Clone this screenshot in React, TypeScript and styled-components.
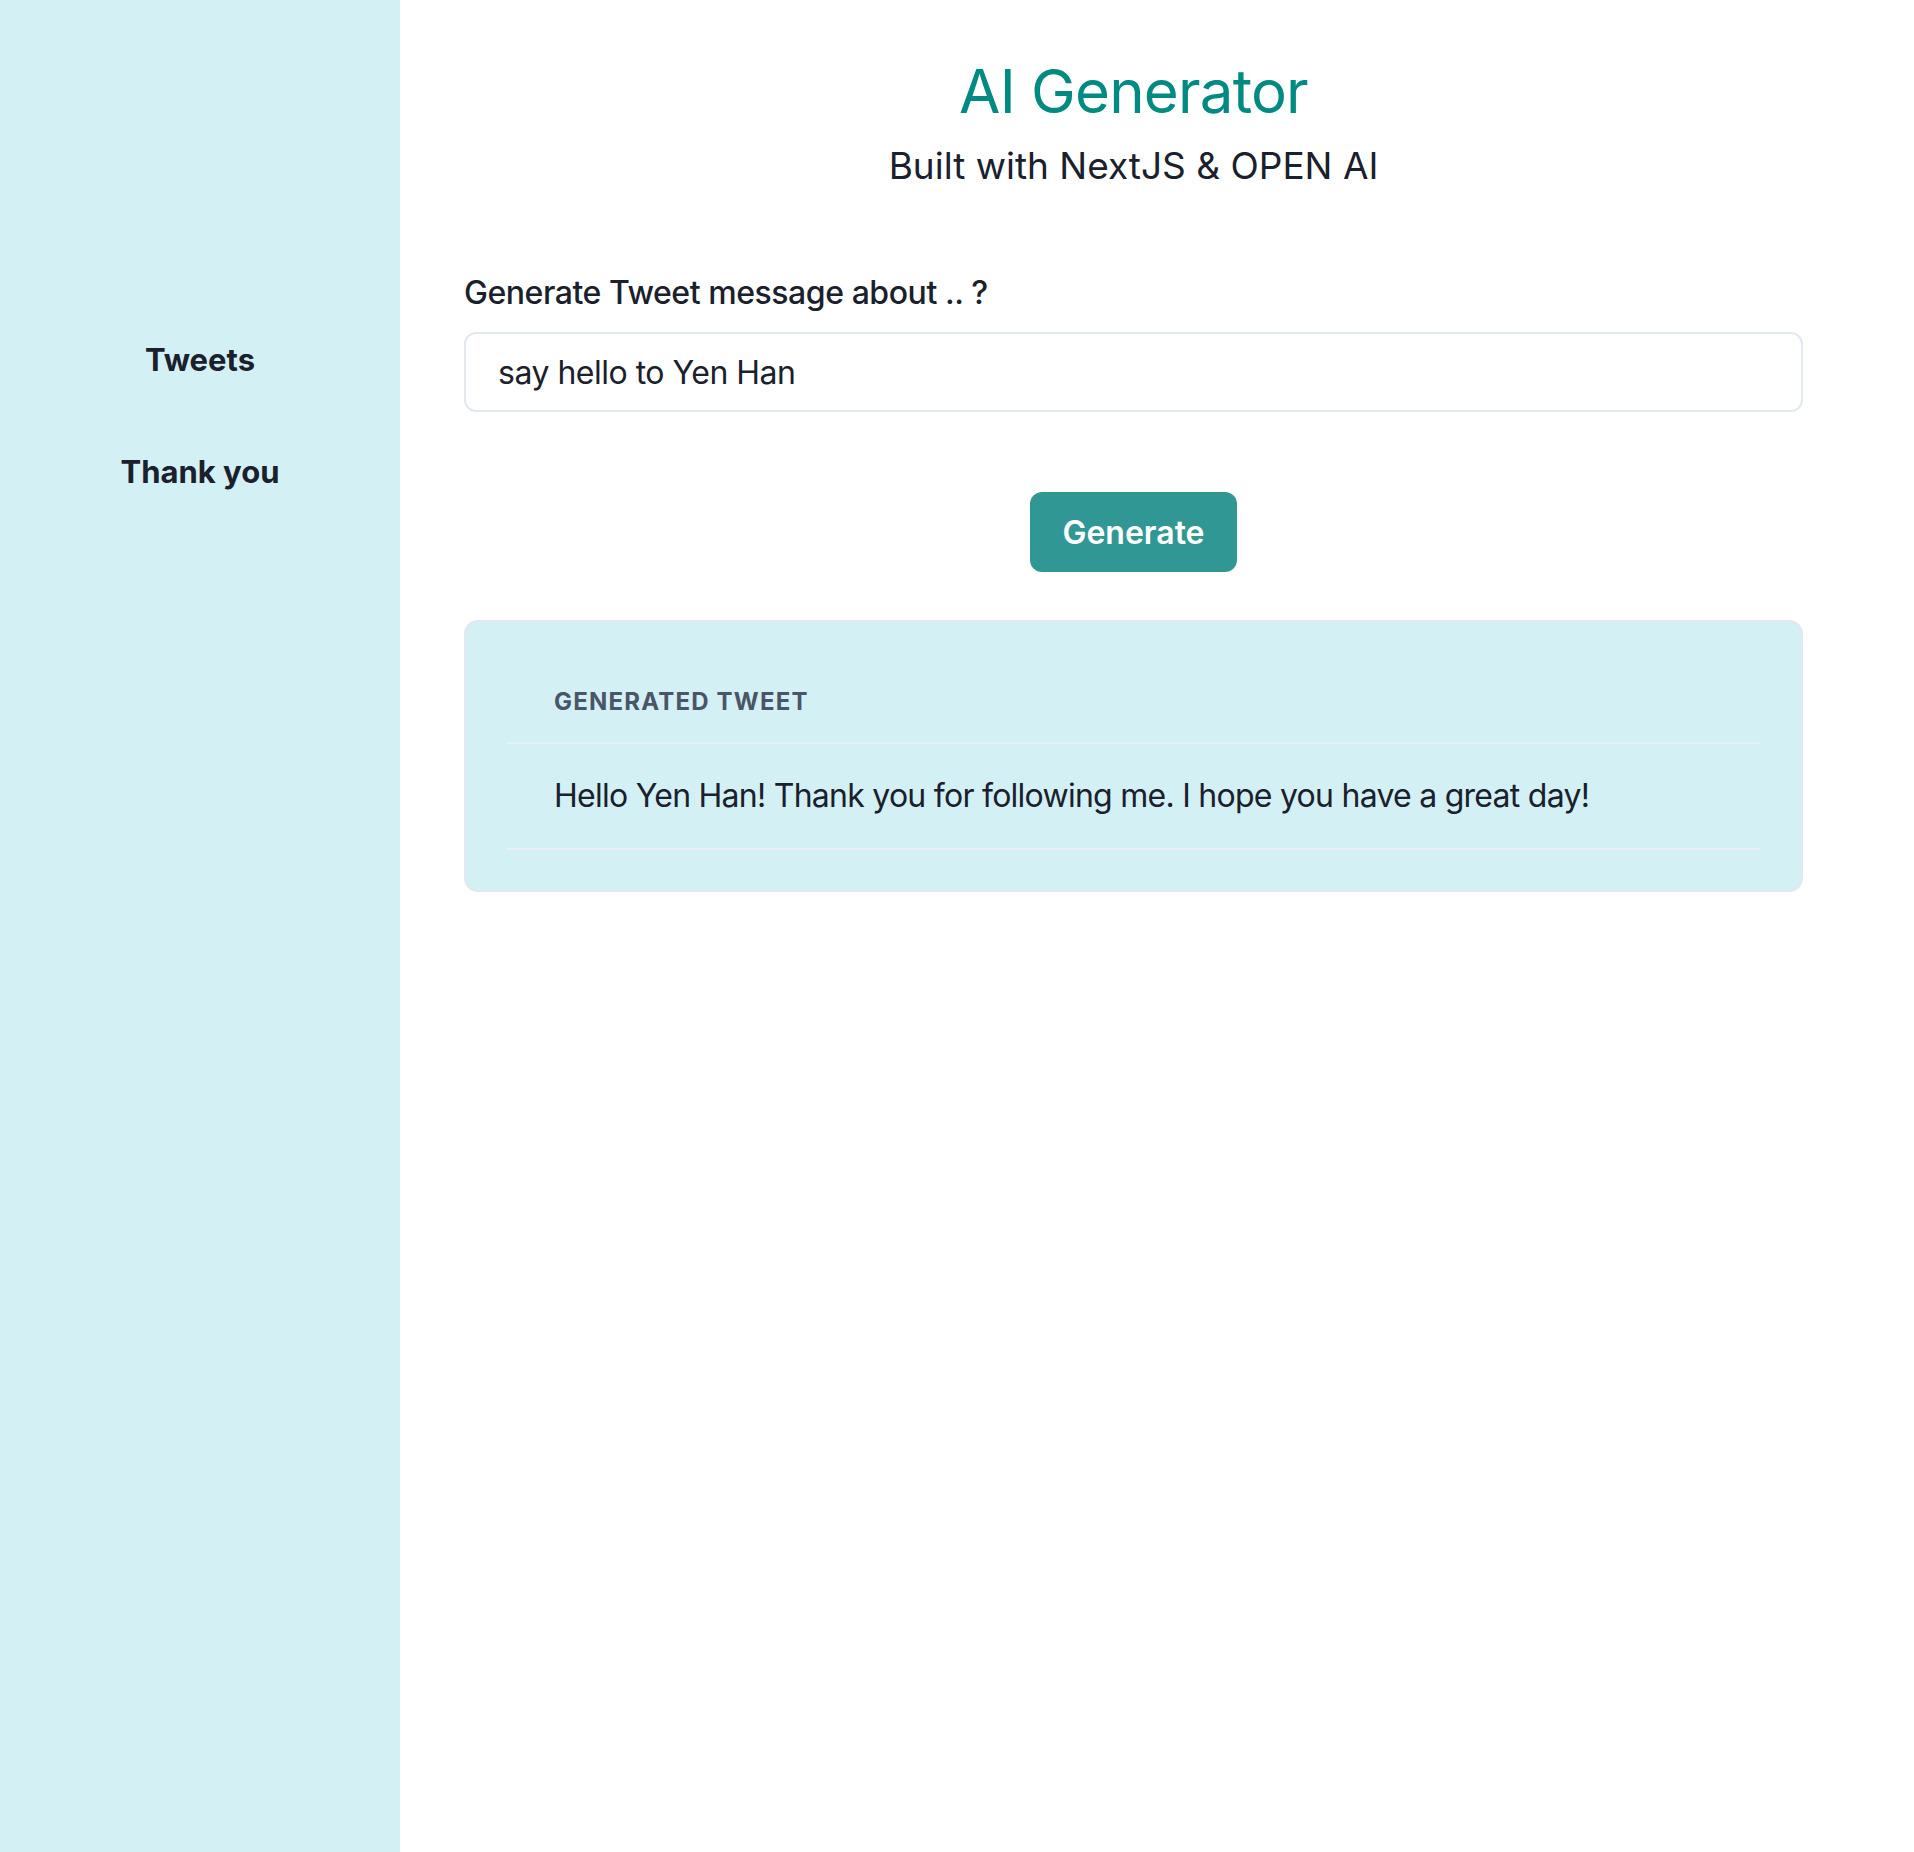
import React from "react";
import styled, { createGlobalStyle } from "styled-components";

const GlobalStyle = createGlobalStyle`
  html, body {
    margin: 0;
    padding: 0;
    background: #ffffff;
  }
  body {
    font-family: Inter, "Noto Sans", "Liberation Sans", sans-serif;
    color: #1a202c;
  }
  * { box-sizing: border-box; }
`;

const Layout = styled.div`
  display: flex;
  min-height: 100vh;
`;

const Sidebar = styled.nav`
  width: 400px;
  flex-shrink: 0;
  background: #d3f0f4;
  display: flex;
  flex-direction: column;
  align-items: center;
  gap: 64px;
  padding-top: 336px;
`;

const NavItem = styled.a`
  font-size: 31px;
  line-height: 48px;
  font-weight: 700;
  color: #1a202c;
  text-decoration: none;
  cursor: pointer;
`;

const Main = styled.main`
  flex: 1;
  padding: 55px 111px 0 64px;
  display: flex;
  flex-direction: column;
`;

const Title = styled.h1`
  margin: 0;
  text-align: center;
  font-size: 60px;
  line-height: 72px;
  font-weight: 400;
  letter-spacing: -0.8px;
  color: #008a82;
`;

const Subtitle = styled.h2`
  margin: 12px 0 0;
  text-align: center;
  font-size: 37px;
  line-height: 54px;
  font-weight: 400;
  color: #1a202c;
`;

const Field = styled.div`
  margin-top: 76px;
  display: flex;
  flex-direction: column;
`;

const Label = styled.label`
  font-size: 32px;
  line-height: 48px;
  font-weight: 500;
  letter-spacing: -0.45px;
  color: #1a202c;
  margin-bottom: 15px;
`;

const Input = styled.input`
  height: 80px;
  width: 100%;
  padding: 0 32px;
  border: 2px solid #e2e8f0;
  border-radius: 12px;
  font-family: inherit;
  font-size: 32px;
  letter-spacing: -0.5px;
  color: #1a202c;
  background: #ffffff;
  outline: none;
`;

const ButtonRow = styled.div`
  display: flex;
  justify-content: center;
  margin-top: 80px;
`;

const Button = styled.button`
  height: 80px;
  padding: 0 32px;
  border: none;
  border-radius: 12px;
  background: #319795;
  color: #ffffff;
  font-family: inherit;
  font-size: 32px;
  font-weight: 600;
  cursor: pointer;
`;

const Card = styled.section`
  margin-top: 48px;
  background: #d3f0f4;
  border: 2px solid #e2e8f0;
  border-radius: 14px;
  padding: 40px;
`;

const Table = styled.table`
  width: 100%;
  border-collapse: collapse;
`;

const Th = styled.th`
  text-align: left;
  padding: 24px 48px;
  font-size: 24px;
  line-height: 32px;
  font-weight: 700;
  letter-spacing: 0.05em;
  text-transform: uppercase;
  color: #4a5568;
  border-bottom: 2px solid #e9f0f5;
`;

const Td = styled.td`
  padding: 32px 48px;
  font-size: 32px;
  line-height: 40px;
  letter-spacing: -0.74px;
  color: #1a202c;
  border-bottom: 2px solid #e9f0f5;
`;

export default function App() {
  return (
    <>
      <GlobalStyle />
      <Layout>
        <Sidebar>
          <NavItem>Tweets</NavItem>
          <NavItem>Thank you</NavItem>
        </Sidebar>
        <Main>
          <Title>AI Generator</Title>
          <Subtitle>Built with NextJS &amp; OPEN AI</Subtitle>
          <Field>
            <Label htmlFor="topic">Generate Tweet message about .. ?</Label>
            <Input id="topic" defaultValue="say hello to Yen Han" />
          </Field>
          <ButtonRow>
            <Button>Generate</Button>
          </ButtonRow>
          <Card>
            <Table>
              <thead>
                <tr>
                  <Th>Generated Tweet</Th>
                </tr>
              </thead>
              <tbody>
                <tr>
                  <Td>Hello Yen Han! Thank you for following me. I hope you have a great day!</Td>
                </tr>
              </tbody>
            </Table>
          </Card>
        </Main>
      </Layout>
    </>
  );
}
